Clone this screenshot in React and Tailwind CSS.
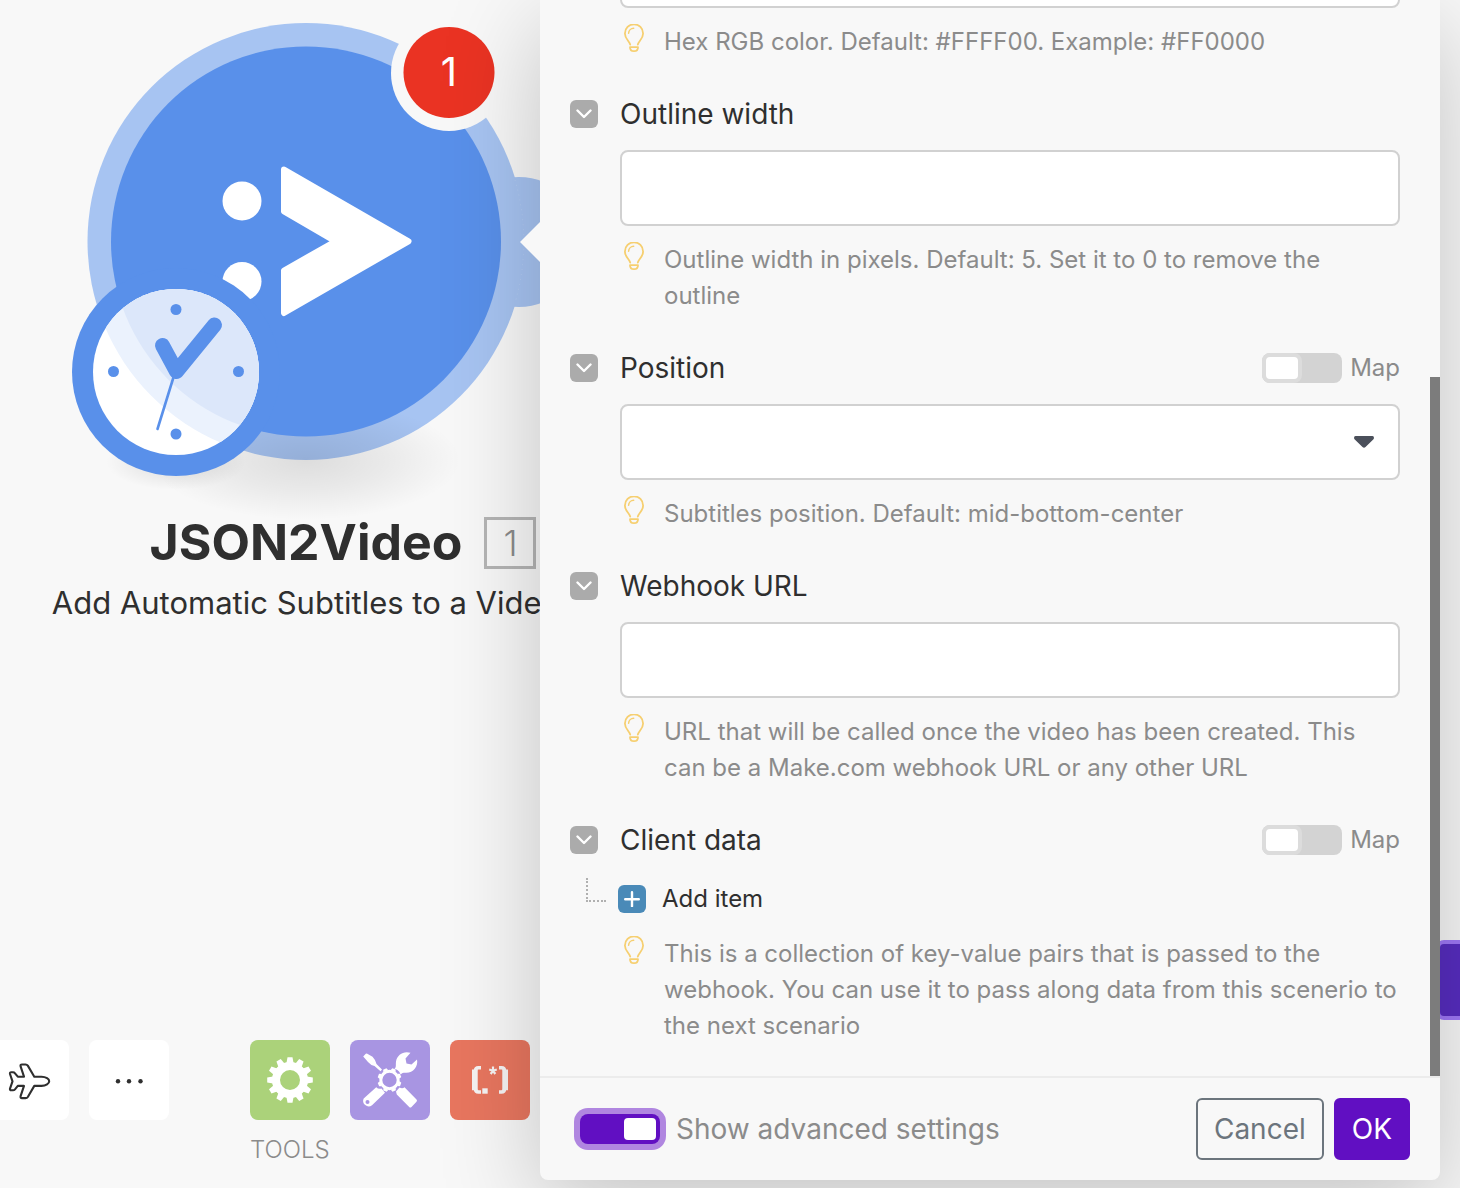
import React, { useState } from 'react';

const Hint = ({ id, children }) => (
  <div className="mt-4 flex gap-4">
    <svg className="h-9 w-7 shrink-0" viewBox="0 1 28 36" fill="none" stroke="#f6cf70" strokeWidth="1.8" strokeLinecap="round" strokeLinejoin="round" aria-hidden="true">
      <path d="M10.2 21.600C9.6 18.200 4.900 16 4.900 10.400a9.100 9.100 0 0 1 18.200 0c0 5.600-4.700 7.800-5.300 11.200" />
      <path d="M8.600 10.200A5.200 5.200 0 0 1 13.700 5.300" strokeWidth="1.500" />
      <path d="M10 24.200h8c0 2.400-1.700 4-4 4s-4-1.600-4-4Z" />
    </svg>
    <p id={id} className="text-2xl leading-9 text-[#8b8b8b]">{children}</p>
  </div>
);

const MapSwitch = ({ title }) => {
  const [on, setOn] = useState(false);
  return (
    <label className="relative flex cursor-pointer items-center gap-2 text-2xl text-[#8b8b8b]">
      <input
        type="checkbox"
        aria-label={`Map ${title}`}
        className="peer sr-only"
        checked={on}
        onChange={() => setOn(!on)}
      />
      <span className="flex h-[30px] w-20 rounded-lg bg-[#d3d3d3] peer-checked:justify-end">
        <span className="h-full w-10 rounded-lg border-4 border-[#dcdcdc] bg-white" />
      </span>
      Map
    </label>
  );
};

const Field = ({ title, inputId, map, children }) => (
  <section className="flex shrink-0 gap-[22px]">
    <button
      type="button"
      aria-label={`Collapse ${title}`}
      className="mt-1 flex size-7 shrink-0 items-center justify-center rounded-md bg-[#ababab]"
    >
      <svg className="size-4" viewBox="0 0 16 16" fill="none" stroke="#fff" strokeWidth="2.4" strokeLinecap="round" strokeLinejoin="round" aria-hidden="true">
        <path d="M1.500 4.500L8 11l6.500-6.500" />
      </svg>
    </button>
    <div className="min-w-0 flex-1">
      <div className="flex h-9 items-center justify-between text-[28px] leading-9 text-[#2f2f2f]">
        {inputId ? <label htmlFor={inputId}>{title}</label> : <h2>{title}</h2>}
        {map && <MapSwitch title={title} />}
      </div>
      {children}
    </div>
  </section>
);

const TextInput = ({ id, label }) => (
  <input
    id={id}
    type="text"
    aria-label={label}
    aria-describedby={`${id}-hint`}
    className="mt-[18px] block h-[76px] w-full rounded-lg border-2 border-[#d1d1d1] bg-white px-4 text-2xl text-[#2f2f2f]"
  />
);

const ModuleNode = () => (
  <svg className="absolute left-0 top-0 h-[520px] w-[600px]" viewBox="0 0 600 520" role="img" aria-label="JSON2Video module">
    <defs>
      <radialGradient id="shadow">
        <stop offset="0" stopColor="#000" stopOpacity="0.11" />
        <stop offset="0.5" stopColor="#000" stopOpacity="0.06" />
        <stop offset="1" stopColor="#000" stopOpacity="0" />
      </radialGradient>
      <clipPath id="face">
        <circle cx="176" cy="372" r="83" />
      </clipPath>
    </defs>
    <circle cx="519" cy="242" r="65" fill="#a7c4f2" />
    <circle cx="306" cy="241.500" r="218.500" fill="#a7c4f2" />
    <path d="M515 180A218.500 218.500 0 0 1 515 303" fill="none" stroke="#b7cff5" strokeDasharray="1 4" />
    <ellipse cx="306" cy="460" rx="155" ry="60" fill="url(#shadow)" />
    <ellipse cx="176" cy="462" rx="70" ry="28" fill="url(#shadow)" />
    <circle cx="306" cy="241.500" r="195" fill="#5990ea" />
    <circle cx="242" cy="201" r="19.500" fill="#fff" />
    <circle cx="242" cy="281.500" r="19.500" fill="#fff" />
    <path d="M284 169.500L408.500 241.300 284 313V270.500L335.500 241.300 284 211.500Z" fill="#fff" stroke="#fff" strokeWidth="6" strokeLinejoin="round" />
    <circle cx="449" cy="73" r="58" fill="#f8f8f8" />
    <circle cx="449" cy="72.500" r="45.500" fill="#ea3323" />
    <text x="449" y="86" textAnchor="middle" fill="#fff" fontSize="40" fontFamily="Inter, sans-serif">1</text>
    <circle cx="176" cy="372" r="104" fill="#5990ea" />
    <circle cx="176" cy="372" r="83" fill="#fff" />
    <g clipPath="url(#face)">
      <circle cx="306" cy="241.500" r="218.500" fill="#ebf2fd" />
      <circle cx="306" cy="241.500" r="195" fill="#dce7fa" />
    </g>
    <g fill="#5990ea">
      <circle cx="176" cy="309.500" r="5.500" />
      <circle cx="176" cy="434" r="5.500" />
      <circle cx="113.500" cy="371.500" r="5.500" />
      <circle cx="238.500" cy="371.500" r="5.500" />
    </g>
    <path d="M162.500 345.500L176.500 371.500 214.500 325" fill="none" stroke="#5990ea" strokeWidth="15" strokeLinecap="round" strokeLinejoin="round" />
    <path d="M174.500 374L157.500 429" stroke="#5990ea" strokeWidth="2.600" strokeLinecap="round" />
  </svg>
);

const PlaneIcon = () => (
  <svg className="size-12" viewBox="0 0 48 48" fill="none" stroke="#2f2f2f" strokeWidth="2.1" strokeLinejoin="round" aria-hidden="true">
    <path d="M29.300 20.700H36.500C41 20.700 44.200 23 44.200 25.300S41 29.900 36.500 29.900H29.300L22.800 41Q22 42.100 20.600 42.100H17Q15.100 42.100 15.600 40.200L19 29.900H12.800L10 33.300Q9.200 34.300 8 34.300H6.300Q4.600 34.300 5 32.600L7.500 25.300 5 18Q4.600 16.300 6.300 16.300H8Q9.200 16.300 10 17.300L12.800 20.700H19L15.600 10.400Q15.100 8.500 17 8.500H20.600Q22 8.500 22.800 9.600Z" />
  </svg>
);

const teeth = [0, 30, 60, 90, 120, 150, 180, 210, 240, 270, 300, 330];

const GearIcon = () => (
  <svg className="size-20" viewBox="0 0 80 80" fill="#fff" aria-hidden="true">
    <circle cx="40" cy="40" r="14" fill="none" stroke="#fff" strokeWidth="8" />
    {teeth.map((deg) => (
      <path key={deg} d="M36.200 24.500L37.500 17.200h5L43.800 24.500Z" transform={`rotate(${deg} 40 40)`} />
    ))}
  </svg>
);

const ToolsIcon = () => (
  <svg className="size-20" viewBox="0 0 80 80" fill="#fff" aria-hidden="true">
    <path d="M13.200 16.500L15.800 13.800Q16.500 13.300 17.300 13.800L22.500 16.800Q26 20.500 26.500 24L32 29.500 30.500 31.200 24.500 26Q21 25.500 18 22Z" />
    <path d="M60.500 12.800C54 10.500 47 14.500 46 21.500C45.600 24.500 46.200 26 45.500 27.500L44.500 28.800C47 29.500 50 31.500 50.500 34.500C52 33 53.500 32.700 56 32.800C63 33 68.500 26.500 67 19.500L61.500 24.500L56.500 23.500L55.500 18.500Z" />
    <path d="M31.500 48.500L35 52.800 22 65.200A5.500 5.500 0 0 1 13.700 58.500L26.200 47.200Q28.500 49.500 31.500 48.500Z" />
    <circle cx="17.500" cy="62" r="2" fill="#a895e2" />
    <path d="M46 51.500L49.500 47.500Q52.500 49 54.500 47.200L66.500 59.500Q67.500 60.500 66.500 61.800L61.500 67Q60.300 68 59.200 67L46.800 54.500Z" />
    <circle cx="39.500" cy="40" r="8.700" fill="none" stroke="#fff" strokeWidth="3" />
    {[22, 67, 112, 157, 202, 247, 292, 337].map((deg) => (
      <path key={deg} d="M36.800 30.500L37.700 28h3.600L42.200 30.500Z" transform={`rotate(${deg} 39.500 40)`} />
    ))}
  </svg>
);

const ParserIcon = () => (
  <svg className="size-20" viewBox="0 0 80 80" fill="none" stroke="#f6f4f4" aria-hidden="true">
    <path d="M31 27.800H28.500Q25.500 27.800 25.500 31V48.800Q25.500 52 28.500 52H31" strokeWidth="3.600" />
    <path d="M49 27.800H51.500Q54.500 27.800 54.500 31V48.800Q54.500 52 51.500 52H49" strokeWidth="3.600" />
    <path d="M24.800 29.500V50.300M55.200 29.500V50.300" strokeWidth="5.600" />
    <rect x="32.300" y="48.300" width="5.400" height="5.400" fill="#f6f4f4" stroke="none" />
    <path d="M43 30.700V26.500M43 30.700L39.200 29.500M43 30.700L46.800 29.500M43 30.700L40.700 34M43 30.700L45.300 34" strokeWidth="2.200" />
  </svg>
);

export default function App() {
  const [advanced, setAdvanced] = useState(true);

  return (
    <div className="flex h-screen overflow-hidden bg-[#f8f8f8] font-[Inter,sans-serif]">
      <main className="relative flex w-[540px] shrink-0 flex-col justify-between">
        <ModuleNode />
        <div className="relative flex w-[612px] flex-col items-center pt-[509px] text-[#2f2f2f]">
          <h1 className="relative text-[50px] font-bold leading-[66px]">
            JSON2Video
            <span className="absolute left-full top-2 ml-[22px] flex size-[52px] items-center justify-center border-[3px] border-[#b5b5b5] text-4xl font-light text-[#8b8b8b]">
              1
            </span>
          </h1>
          <p className="whitespace-nowrap pt-2 text-[31px] leading-10">Add Automatic Subtitles to a Video</p>
        </div>
        <div className="flex pb-5">
          <div className="flex gap-5">
            <button type="button" aria-label="Explain flow" className="-ml-[11px] flex size-20 items-center justify-center rounded-lg bg-white">
              <PlaneIcon />
            </button>
            <button type="button" aria-label="More" className="flex size-20 items-center justify-center rounded-lg bg-white">
              <svg className="h-2 w-8" viewBox="0 0 32 8" fill="#2f2f2f" aria-hidden="true">
                <circle cx="5" cy="5.300" r="2.200" />
                <circle cx="16" cy="5.300" r="2.200" />
                <circle cx="27.500" cy="5.300" r="2.200" />
              </svg>
            </button>
          </div>
          <div className="ml-[81px]">
            <div className="flex gap-5">
              <button type="button" aria-label="Flow control" className="size-20 rounded-lg bg-[#abd27a]">
                <GearIcon />
              </button>
              <button type="button" aria-label="Tools" className="size-20 rounded-lg bg-[#a895e2]">
                <ToolsIcon />
              </button>
              <button type="button" aria-label="Text parser" className="size-20 rounded-lg bg-[#e8765f]">
                <ParserIcon />
              </button>
            </div>
            <h2 className="pt-3 text-2xl font-light leading-9 text-[#8b8b8b]">TOOLS</h2>
          </div>
        </div>
      </main>

      <form
        className="relative z-10 mb-2 flex min-w-0 flex-1 flex-col rounded-b-lg bg-[#f8f8f8] shadow-[0_25px_100px_rgba(0,0,0,0.22)]"
        onSubmit={(e) => e.preventDefault()}
      >
        {/* pointer towards the module */}
        <svg className="absolute -left-5 top-[222px] h-10 w-5" viewBox="0 0 20 40" fill="#f8f8f8" aria-hidden="true">
          <path d="M20 0L0 20L20 40Z" />
        </svg>

        <div className="flex min-h-0 flex-1">
          <div className="flex min-w-0 flex-1 flex-col justify-end gap-9 overflow-hidden px-[30px] pb-8">
            <div className="shrink-0 pl-[50px]">
              <TextInput id="outline-color" label="Outline color" />
              <Hint id="outline-color-hint">Hex RGB color. Default: #FFFF00. Example: #FF0000</Hint>
            </div>
            <Field title="Outline width" inputId="outline-width">
              <TextInput id="outline-width" />
              <Hint id="outline-width-hint">
                Outline width in pixels. Default: 5. Set it to 0 to remove the outline
              </Hint>
            </Field>
            <Field title="Position" inputId="position" map>
              <div className="relative mt-[18px]">
                <select
                  id="position"
                  defaultValue=""
                  aria-describedby="position-hint"
                  className="block h-[76px] w-full appearance-none rounded-lg border-2 border-[#d1d1d1] bg-white px-4 text-2xl text-[#2f2f2f]"
                >
                  <option value="" />
                </select>
                <svg className="pointer-events-none absolute right-[26px] top-8 h-3 w-5" viewBox="0 0 20 12" fill="#4b505b" aria-hidden="true">
                  <path d="M1.500 0H18.500Q20 .2 20 2Q19.800 3 19 3.700L11.500 11Q10 12.400 8.500 11L1 3.700Q.2 3 0 2Q0 .2 1.500 0Z" />
                </svg>
              </div>
              <Hint id="position-hint">Subtitles position. Default: mid-bottom-center</Hint>
            </Field>
            <Field title="Webhook URL" inputId="webhook-url">
              <TextInput id="webhook-url" />
              <Hint id="webhook-url-hint">
                URL that will be called once the video has been created. This can be a Make.com webhook URL or any other URL
              </Hint>
            </Field>
            <Field title="Client data" map>
              <div className="-ml-[34px] mt-5 flex h-[42px] items-center gap-3">
                <span className="h-6 w-5 self-start border-b-2 border-l-2 border-dotted border-[#b0b0b0]" />
                <button type="button" className="flex items-center gap-4 text-2xl text-[#2f2f2f]">
                  <span className="flex size-7 items-center justify-center rounded-md bg-[#4a8ab8]">
                    <svg className="size-4" viewBox="0 0 16 16" stroke="#fff" strokeWidth="2.4" strokeLinecap="round" aria-hidden="true">
                      <path d="M8 1.200V15.200M1.200 8.200H14.800" />
                    </svg>
                  </span>
                  Add item
                </button>
              </div>
              <Hint>
                This is a collection of key-value pairs that is passed to the webhook. You can use it to pass along data from this scenerio to the next scenario
              </Hint>
            </Field>
          </div>
          <div className="flex w-[10px] shrink-0 flex-col justify-end">
            <div className="h-[65%] bg-[#7c7c7c]" />
          </div>
        </div>

        <footer className="flex items-center justify-between border-t-2 border-[#ececec] py-5 pl-10 pr-[30px] text-[28px]">
          <label className="relative flex cursor-pointer items-center gap-4 text-[#8b8b8b]">
            <input
              type="checkbox"
              className="peer sr-only"
              checked={advanced}
              onChange={() => setAdvanced(!advanced)}
            />
            <span className="flex h-[30px] w-20 rounded-lg bg-[#d3d3d3] p-1 ring-6 ring-[#b086e0] peer-checked:justify-end peer-checked:bg-[#610fc2]">
              <span className="h-full w-8 rounded-sm bg-white" />
            </span>
            Show advanced settings
          </label>
          <div className="flex gap-[10px]">
            <button type="button" className="h-[62px] rounded-md border-2 border-[#6c757d] px-4 text-[#6c757d]">
              Cancel
            </button>
            <button type="submit" className="h-[62px] rounded-md border-2 border-[#610fc2] bg-[#610fc2] px-4 text-white">
              OK
            </button>
          </div>
        </footer>
      </form>

      <aside className="flex w-5 shrink-0 flex-col justify-end pb-[168px]">
        <button type="button" aria-label="Run" className="-ml-1 h-20 w-10 rounded-lg border-4 border-[#9f78f8] bg-[#572dc0]" />
      </aside>
    </div>
  );
}
